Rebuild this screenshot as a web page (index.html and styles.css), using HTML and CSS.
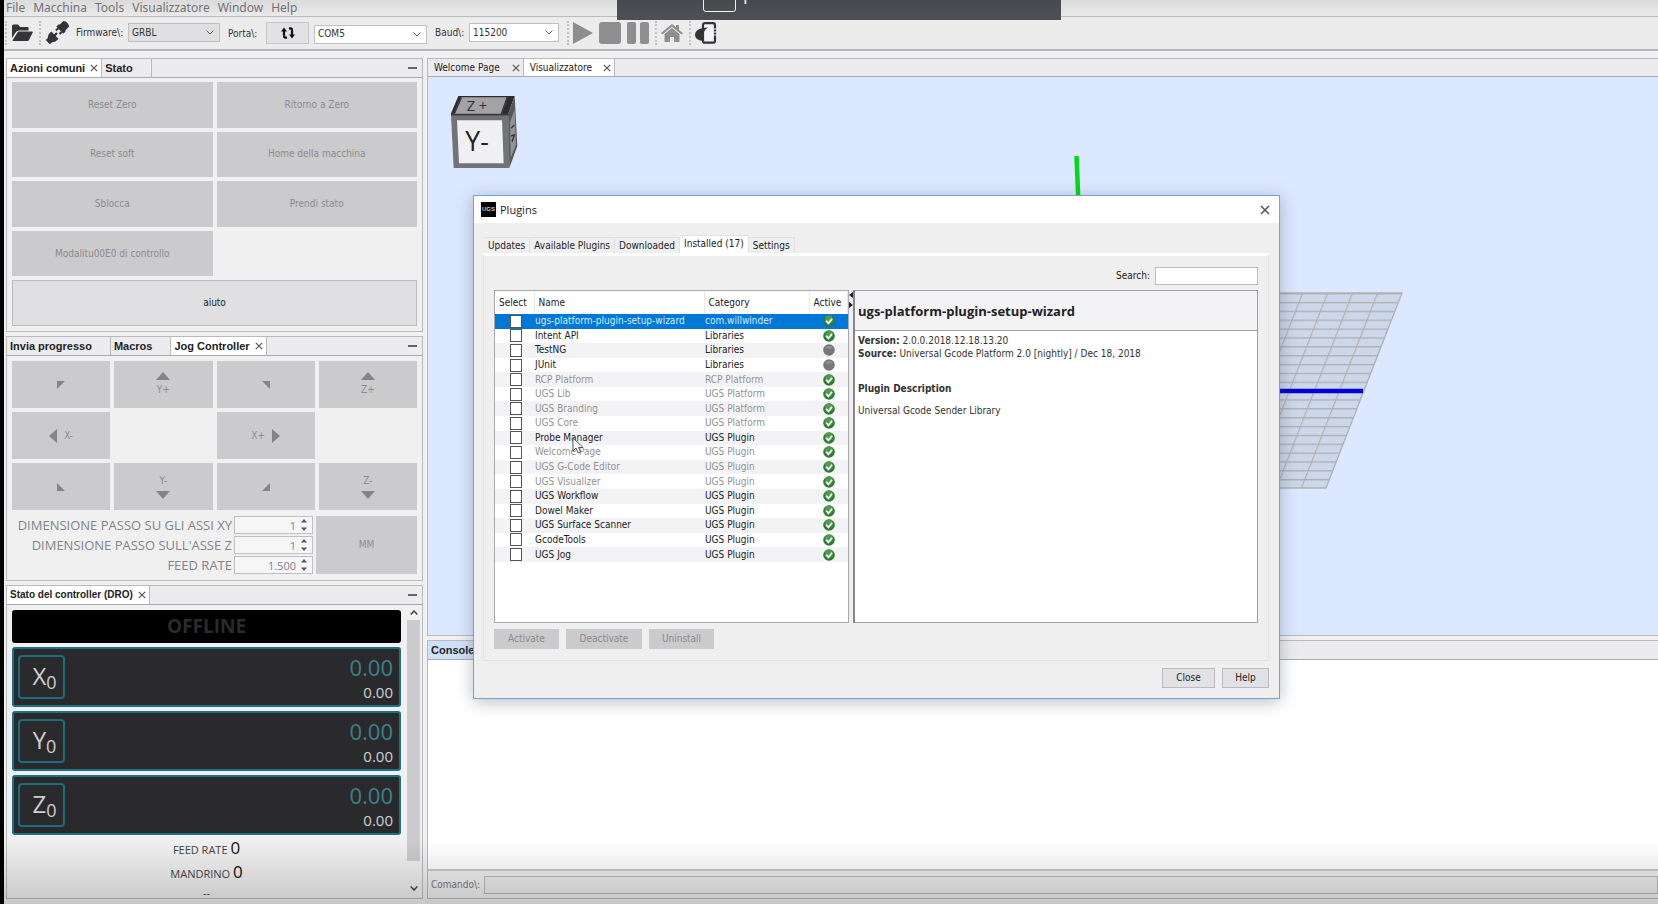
FILE: index.html
```html
<!DOCTYPE html>
<html lang="it">
<head>
  <meta charset="UTF-8">
  <title>Universal Gcode Platform</title>
  <link rel="stylesheet" href="styles.css">
</head>
<body>
  <!-- shared icons -->
  <svg class="defs" width="0" height="0">
    <symbol id="x" viewBox="0 0 8 8"><path d="M.8.8l6.4 6.4M7.2.8L.8 7.2" stroke="currentColor" stroke-width="1.2" fill="none"/></symbol>
    <symbol id="ok" viewBox="0 0 12 12"><circle cx="6" cy="6" r="5.8" fill="#2f7d33"/><circle cx="6" cy="4.6" r="4" fill="#4f9a4f"/><path d="M3.2 5.8l2.2 2.6 3.6-4.6" stroke="#fff" stroke-width="1.7" fill="none"/></symbol>
    <symbol id="off" viewBox="0 0 12 12"><circle cx="6" cy="6" r="5.8" fill="#777"/><path d="M2 4.5a4.5 4.5 0 0 1 8 0z" fill="#929292"/></symbol>
    <symbol id="spin" viewBox="0 0 6 12"><path d="M0 3.5L3 0l3 3.5zM0 8.5L3 12l3-3.5z" fill="#555"/></symbol>
  </svg>

  <nav class="menubar">
    <a href="#">File</a><a href="#">Macchina</a><a href="#">Tools</a><a href="#">Visualizzatore</a><a href="#">Window</a><a href="#">Help</a>
  </nav>

  <div class="toolbar">
    <i class="sep"></i>
    <button class="tool" aria-label="Apri"><svg width="22" height="18" viewBox="0 0 22 18"><path d="M1 14V2q0-1.500 1.500-1.500h4.500l2 2.500h7.500q1 0 1 1v2.500H8q-2 0-3 1.500z" fill="#333338"/><path d="M6.500 8.500q.5-1 1.500-1h13q1.300 0 .6 1.300L18 16q-.5 1-1.700 1H2.500q-1.200 0-.6-1.200z" fill="#333338"/></svg></button>
    <i class="sep"></i>
    <button class="tool" aria-label="Connetti"><svg width="24" height="24" viewBox="0 0 24 24"><g transform="rotate(45 12 12)" fill="#333338"><path d="M8-1q4-3 8 0v5l1 1v3H7V5l1-1z"/><path d="M8.500 8h2v3h-2zM13.500 8h2v3h-2z"/><path d="M7 15h10v4l-2 3v3H9v-3l-2-3z"/><path d="M10.900 12h2.200v4h-2.200z"/></g></svg></button>
    <label for="fw">Firmware\:</label>
    <select id="fw" class="combo grey"><option>GRBL</option></select>
    <label class="porta" for="port">Porta\:</label>
    <button class="refresh" aria-label="Aggiorna"><svg width="14" height="12" viewBox="0 0 14 12" fill="none" stroke="#111" stroke-width="2.200"><path d="M6 10.600H4.500q-1.500 0-1.500-1.500V3"/><path d="M8 1.400h1.500q1.500 0 1.500 1.500V9"/><path d="M0 4.500h6L3 .5zM8 7.500h6l-3 4z" fill="#111" stroke="none"/></svg></button>
    <select id="port" class="combo port"><option>COM5</option></select>
    <label class="baudl" for="baud">Baud\:</label>
    <select id="baud" class="combo baud"><option>115200</option></select>
    <i class="sep"></i>
    <button class="tool run" aria-label="Play" disabled><svg width="20" height="22"><path d="M0 0l20 11L0 22z"/></svg></button>
    <button class="tool run" aria-label="Stop" disabled><svg width="22" height="22"><rect width="22" height="22" rx="3"/></svg></button>
    <button class="tool run" aria-label="Pausa" disabled><svg width="22" height="22"><rect width="9" height="22" rx="2"/><rect x="13" width="9" height="22" rx="2"/></svg></button>
    <i class="sep"></i>
    <button class="tool run" aria-label="Home" disabled><svg width="22" height="18" viewBox="0 0 22 18"><path d="M0 9L11 0l4 3.300V1h3v5l4 3-1.300 1.500L11 2.800 1.300 10.500z"/><path d="M3.500 10L11 4l7.500 6v8H13v-5H9v5H3.500z"/></svg></button>
    <i class="sep"></i>
    <button class="tool" aria-label="Pendant"><svg width="22" height="22" viewBox="0 0 22 22"><rect x="8" y="1.200" width="12" height="19.500" rx="2" fill="#f4f4f6" stroke="#333338" stroke-width="2.200"/><path d="M13 5.500Q0 6 0 13q0 5 8 6v-5q0-5 5-8.500z" fill="#333338"/><path d="M18 7h4M18 10h4M18 13h4" stroke="#f4f4f6"/></svg></button>
  </div>

  <main>
    <aside>
      <section class="panel">
        <div class="tabs bold">
          <button class="on">Azioni comuni <svg><use href="#x"/></svg></button><button class="wide">Stato</button>
          <i class="min"></i>
        </div>
        <div class="actions">
          <button disabled>Reset Zero</button>
          <button disabled>Ritorno a Zero</button>
          <button disabled>Reset soft</button>
          <button disabled>Home della macchina</button>
          <button disabled>Sblocca</button>
          <button disabled>Prendi stato</button>
          <button disabled>Modalitu00E0 di controllo</button>
          <button class="help">aiuto</button>
        </div>
      </section>

      <section class="panel">
        <div class="tabs bold">
          <button class="wide">Invia progresso</button><button class="wide">Macros</button><button class="on">Jog Controller <svg><use href="#x"/></svg></button>
          <i class="min"></i>
        </div>
        <div class="jogbody">
          <div class="jog">
            <button disabled aria-label="X- Y+"><svg width="8" height="8"><path d="M0 0h8L0 8z"/></svg></button>
            <button disabled class="col"><svg width="14" height="8"><path d="M0 8l7-8 7 8z"/></svg>Y+</button>
            <button disabled aria-label="X+ Y+"><svg width="8" height="8"><path d="M0 0h8v8z"/></svg></button>
            <button disabled class="col"><svg width="14" height="8"><path d="M0 8l7-8 7 8z"/></svg>Z+</button>
            <button disabled><svg width="8" height="14"><path d="M8 0v14L0 7z"/></svg>X-</button>
            <span></span>
            <button disabled>X+<svg width="8" height="14"><path d="M0 0v14l8-7z"/></svg></button>
            <span></span>
            <button disabled aria-label="X- Y-"><svg width="8" height="8"><path d="M0 0v8h8z"/></svg></button>
            <button disabled class="col">Y-<svg width="14" height="8"><path d="M0 0h14L7 8z"/></svg></button>
            <button disabled aria-label="X+ Y-"><svg width="8" height="8"><path d="M8 0v8H0z"/></svg></button>
            <button disabled class="col">Z-<svg width="14" height="8"><path d="M0 0h14L7 8z"/></svg></button>
          </div>
          <div class="steps">
            <div class="fields">
              <label for="sxy">DIMENSIONE PASSO SU GLI ASSI XY</label>
              <div class="spinner"><input id="sxy" value="1" disabled><svg width="6" height="12"><use href="#spin"/></svg></div>
              <label for="sz">DIMENSIONE PASSO SULL'ASSE Z</label>
              <div class="spinner"><input id="sz" value="1" disabled><svg width="6" height="12"><use href="#spin"/></svg></div>
              <label for="feed">FEED RATE</label>
              <div class="spinner"><input id="feed" value="1.500" disabled><svg width="6" height="12"><use href="#spin"/></svg></div>
            </div>
            <button class="mm" disabled>MM</button>
          </div>
        </div>
      </section>

      <section class="panel dropanel">
        <div class="tabs bold">
          <button class="on">Stato del controller (DRO) <svg><use href="#x"/></svg></button>
          <i class="min"></i>
        </div>
        <div class="scroll">
          <div class="dro">
            <div class="state">OFFLINE</div>
            <div class="axis"><button>X<small>0</small></button><div><b>0.00</b><span>0.00</span></div></div>
            <div class="axis"><button>Y<small>0</small></button><div><b>0.00</b><span>0.00</span></div></div>
            <div class="axis"><button>Z<small>0</small></button><div><b>0.00</b><span>0.00</span></div></div>
            <p>FEED RATE <b>0</b></p>
            <p>MANDRINO <b>0</b></p>
            <p class="dash">--</p>
          </div>
          <div class="bar">
            <svg width="8" height="5"><path d="M.7 4.500L4 1l3.300 3.500"/></svg>
            <i></i>
            <svg width="8" height="5"><path d="M.7.5L4 4 7.300.5"/></svg>
          </div>
        </div>
      </section>
    </aside>

    <div class="right">
      <section class="editor">
        <div class="tabs">
          <button class="wp">Welcome Page <svg><use href="#x"/></svg></button><button class="on">Visualizzatore <svg><use href="#x"/></svg></button>
        </div>
        <div class="view">
          <svg class="scene" width="1230" height="562">
            <defs>
              <pattern id="bed" width="25" height="8.860" patternUnits="userSpaceOnUse" patternTransform="matrix(1 0 -.391 1 974 216)">
                <path d="M0 .6h25M.6 0v8.860" stroke="#b0b0b2" stroke-width="1.300"/>
              </pattern>
            </defs>
            <path d="M700 216h274l-76 195H624z" fill="#ccd7e9"/>
            <path d="M700 216h274l-76 195H624z" fill="url(#bed)" stroke="#b0b0b2" stroke-width="1.300"/>
            <path d="M700 314h235" stroke="#0000d0" stroke-width="4.500"/>
            <path d="M648.500 79l2.500 60" stroke="#00dc14" stroke-width="4.500"/>
          </svg>
          <svg class="cube" width="70" height="74" viewBox="150 285 210 222">
            <path d="M152 343l23-55h169l-20 56z" fill="#2c2b30"/>
            <path d="M184 292h138l-18 50H164z" fill="#a3a3a5"/>
            <path d="M324 344l20-56 8 150-24 66z" fill="#55555a"/>
            <path d="M330 366l14-38 4 106-16 40z" fill="#939396"/>
            <path d="M333 385l10-10M333 408l12-4M336 425l8-22" stroke="#333" stroke-width="4"/>
            <path d="M153 344h174l1 160H161z" fill="#717377"/>
            <path d="M171 361h135l5 129H177z" fill="#f0f0f2"/>
            <path d="M153 344h174M162 342l22-50M304 342l18-50" stroke="#3c3c40" stroke-width="5"/>
            <text x="196" y="453" font-size="80" fill="#222">Y-</text>
            <text x="200" y="333" font-size="44" fill="#333">Z +</text>
          </svg>
        </div>
      </section>
      <section class="console">
        <div class="tabs bold"><button>Console</button></div>
        <div class="log"></div>
        <div class="cmd"><label for="cmd">Comando\:</label><input id="cmd"></div>
      </section>
    </div>
  </main>

  <div class="dialog" role="dialog" aria-label="Plugins">
    <div class="title">
      <span class="logo">UGS</span>Plugins
      <button aria-label="Chiudi"><svg width="10" height="10"><use href="#x"/></svg></button>
    </div>
    <div class="dbody">
      <div class="dtabs"><button>Updates</button><button>Available Plugins</button><button>Downloaded</button><button class="on">Installed (17)</button><button>Settings</button></div>
      <div class="pane">
        <div class="search"><label for="q">Search:</label><input id="q"></div>
        <div class="split">
          <div class="list">
            <table>
              <thead><tr><th class="c1">Select</th><th class="c2">Name</th><th class="c3">Category</th><th>Active</th></tr></thead>
              <tbody>
                <tr class="sel"><td><input type="checkbox" aria-label="ugs-platform-plugin-setup-wizard"></td><td>ugs-platform-plugin-setup-wizard</td><td>com.willwinder</td><td><svg><use href="#ok"/></svg></td></tr>
                <tr><td><input type="checkbox" aria-label="Intent API"></td><td>Intent API</td><td>Libraries</td><td><svg><use href="#ok"/></svg></td></tr>
                <tr><td><input type="checkbox" aria-label="TestNG"></td><td>TestNG</td><td>Libraries</td><td><svg><use href="#off"/></svg></td></tr>
                <tr><td><input type="checkbox" aria-label="JUnit"></td><td>JUnit</td><td>Libraries</td><td><svg><use href="#off"/></svg></td></tr>
                <tr class="dim"><td><input type="checkbox" aria-label="RCP Platform"></td><td>RCP Platform</td><td>RCP Platform</td><td><svg><use href="#ok"/></svg></td></tr>
                <tr class="dim"><td><input type="checkbox" aria-label="UGS Lib"></td><td>UGS Lib</td><td>UGS Platform</td><td><svg><use href="#ok"/></svg></td></tr>
                <tr class="dim"><td><input type="checkbox" aria-label="UGS Branding"></td><td>UGS Branding</td><td>UGS Platform</td><td><svg><use href="#ok"/></svg></td></tr>
                <tr class="dim"><td><input type="checkbox" aria-label="UGS Core"></td><td>UGS Core</td><td>UGS Platform</td><td><svg><use href="#ok"/></svg></td></tr>
                <tr><td><input type="checkbox" aria-label="Probe Manager"></td><td>Probe Manager</td><td>UGS Plugin</td><td><svg><use href="#ok"/></svg></td></tr>
                <tr class="dim"><td><input type="checkbox" aria-label="Welcome Page"></td><td>Welcome Page</td><td>UGS Plugin</td><td><svg><use href="#ok"/></svg></td></tr>
                <tr class="dim"><td><input type="checkbox" aria-label="UGS G-Code Editor"></td><td>UGS G-Code Editor</td><td>UGS Plugin</td><td><svg><use href="#ok"/></svg></td></tr>
                <tr class="dim"><td><input type="checkbox" aria-label="UGS Visualizer"></td><td>UGS Visualizer</td><td>UGS Plugin</td><td><svg><use href="#ok"/></svg></td></tr>
                <tr><td><input type="checkbox" aria-label="UGS Workflow"></td><td>UGS Workflow</td><td>UGS Plugin</td><td><svg><use href="#ok"/></svg></td></tr>
                <tr><td><input type="checkbox" aria-label="Dowel Maker"></td><td>Dowel Maker</td><td>UGS Plugin</td><td><svg><use href="#ok"/></svg></td></tr>
                <tr><td><input type="checkbox" aria-label="UGS Surface Scanner"></td><td>UGS Surface Scanner</td><td>UGS Plugin</td><td><svg><use href="#ok"/></svg></td></tr>
                <tr><td><input type="checkbox" aria-label="GcodeTools"></td><td>GcodeTools</td><td>UGS Plugin</td><td><svg><use href="#ok"/></svg></td></tr>
                <tr><td><input type="checkbox" aria-label="UGS Jog"></td><td>UGS Jog</td><td>UGS Plugin</td><td><svg><use href="#ok"/></svg></td></tr>
              </tbody>
            </table>
          </div>
          <svg class="grip" width="4" height="20"><path d="M4 2v6L0 5zM0 12v6l4-3z"/></svg>
          <div class="detail">
            <h2>ugs-platform-plugin-setup-wizard</h2>
            <div class="info">
              <div><b>Version:</b> 2.0.0.2018.12.18.13.20</div>
              <div><b>Source:</b> Universal Gcode Platform 2.0 [nightly] / Dec 18, 2018</div>
              <h3>Plugin Description</h3>
              <div>Universal Gcode Sender Library</div>
            </div>
          </div>
        </div>
        <div class="acts"><button disabled>Activate</button><button class="de" disabled>Deactivate</button><button disabled>Uninstall</button></div>
      </div>
      <div class="foot"><button>Close</button><button>Help</button></div>
    </div>
  </div>

  <svg class="cursor" width="12" height="17" viewBox="0 0 12 17"><path d="M1 1v13l3-3 2 5 2.500-1-2-4.500H11z" fill="#fff" stroke="#555"/></svg>
  <div class="toast"><i></i><span>p</span></div>
  <div class="shade"></div>
</body>
</html>
```
FILE: styles.css
```css
* { box-sizing: border-box; }
html, body { height: 100%; }
body { margin: 0; overflow: hidden; display: flex; flex-direction: column; border-left: 4px solid #000; background: #f0f0f1; color: #222; font: 10px/14px "DejaVu Sans Condensed", "Noto Sans", sans-serif; }
button, input, select { font: inherit; color: inherit; margin: 0; padding: 0; border: 0; border-radius: 0; }
button { background: none; white-space: nowrap; }
a { color: inherit; text-decoration: none; }
.defs { position: absolute; }

/* menu + toolbar */
.menubar { flex: none; height: 17px; padding: 0 2px; display: flex; gap: 8px; align-items: center; border-bottom: 1px solid #bdbdc0; background: #ededee; color: #777; font: 12px/16px "Noto Sans", sans-serif; }
.toolbar { flex: none; height: 34px; padding: 0 1px 1px; display: flex; align-items: center; border-bottom: 2px solid #b6b6ba; background: #ececed; color: #333; }
.toolbar label { margin: 0 5px 0 7px; width: 47px; }
.toolbar .porta { width: 31px; margin: 2px 7px 0 8px; }
.toolbar .baudl { width: 29px; margin: 0 5px 0 8px; }
.sep { width: 2px; height: 24px; margin-right: 4px; border-left: 2px dotted #c2c2c6; }
.tool { height: 24px; margin-right: 6px; display: flex; align-items: center; }
.tool + label { margin-left: 1px; }
.run { fill: #8e8e90; }
.combo { appearance: none; width: 92px; height: 19px; padding: 0 3px; border: 1px solid #c0c0c4; background: #fff url("data:image/svg+xml,%3Csvg xmlns='http://www.w3.org/2000/svg' width='8' height='5'%3E%3Cpath d='M.5.5L4 4 7.500.5' fill='none' stroke='%23666'/%3E%3C/svg%3E") no-repeat right 5px center; }
.grey { background-color: #e0e0e2; }
.port { width: 113px; margin-left: 5px; margin-top: 3px; }
.baud { width: 90px; margin-right: 8px; }
.refresh { width: 43px; height: 22px; border: 1px solid #c6c6ca; background: #e2e2e4; display: flex; align-items: center; justify-content: center; }

main { flex: 1; min-height: 0; display: flex; gap: 4px; padding: 7px 0 5px 2px; }
aside { width: 417px; display: flex; flex-direction: column; gap: 4px; }
.right { flex: 1; min-width: 0; display: flex; flex-direction: column; gap: 4px; }
.panel { border: 1px solid #b9b9be; flex: none; }

.tabs { height: 19px; flex: none; display: flex; border-bottom: 1px solid #a9a9ae; background: #ececee; }
.bold { font: bold 11px/14px "Liberation Sans", sans-serif; }
.tabs button { padding: 0 3px; display: flex; align-items: center; gap: 5px; border-right: 1px solid #b9b9be; }
.tabs svg { width: 8px; height: 8px; color: #555; }
.tabs .on { background: #fff; }
.tabs .wide { padding-right: 18px; }
.tabs .wp { padding-left: 6px; gap: 12px; }
.editor .on { gap: 11px; padding-left: 6px; }
.min { width: 9px; height: 2px; margin: 8px 5px 0 auto; background: #666; }

.actions { height: 253px; padding: 4px 5px 5px; display: grid; grid-template-columns: 1fr 1fr; grid-auto-rows: 1fr; gap: 4px; }
.actions button, .jog button, .mm { background: #cbcacd; color: #8b8b8d; }
.actions .help { grid-column: 1 / 3; border: 1px solid #bdbdc1; background: #e0dfe2; color: #222; }

.jogbody { padding: 5px; }
.jog { height: 149px; display: grid; grid-template-columns: repeat(4, 1fr); grid-auto-rows: 1fr; gap: 4px; }
.jog button { display: flex; align-items: center; justify-content: center; gap: 7px; fill: #858587; }
.jog .col { flex-direction: column; gap: 3px; }
.steps { display: flex; gap: 3px; margin: 6px 0 1px; }
.fields { flex: 1; display: grid; grid-template-columns: 1fr 79px; gap: 2px; align-items: center; text-align: right; color: #838386; font: 13px/18px "Open Sans", "Noto Sans", sans-serif; white-space: nowrap; }
.spinner { height: 18px; display: flex; align-items: center; border: 1px solid #c0c0c4; background: #f6f6f7; font-size: 11px; line-height: 14px; }
.spinner input { width: 61px; height: 16px; flex: none; text-align: right; background: none; }
.spinner svg { margin-left: 5px; }
.mm { width: 101px; }

/* DRO */
.dropanel { flex: 1; min-height: 0; display: flex; flex-direction: column; }
.dropanel .tabs { font-size: 10px; }
.scroll { flex: 1; min-height: 0; display: flex; padding: 5px 0 0 5px; }
.dro { flex: 1; display: flex; flex-direction: column; gap: 4px; font-family: "Open Sans", "Noto Sans", sans-serif; }
.state { flex: none; height: 33px; border-radius: 3px; background: #000; color: #2b2b2d; text-align: center; font-weight: bold; font-size: 19px; line-height: 33px; }
.axis { flex: none; height: 60px; padding: 0 6px 0 4px; display: flex; align-items: center; justify-content: space-between; border: 2px solid #1c7183; border-radius: 3px; background: #2a2a2d; }
.axis button { width: 47px; height: 44px; padding-left: 6px; border: 2px solid #1b6c7d; border-radius: 4px; color: #cfcfcf; font-size: 24px; line-height: 38px; }
.axis small { font-size: 18px; position: relative; top: 4px; }
.axis div { display: flex; flex-direction: column; align-items: flex-end; }
.axis b { color: #3f7f8c; font-weight: normal; font-size: 22px; line-height: 30px; }
.axis span { color: #cfcfcf; font-size: 15px; line-height: 20px; }
.dro p { margin: 0; height: 20px; text-align: center; color: #444; font-size: 11px; line-height: 20px; }
.dro p b { color: #111; font-weight: normal; font-size: 17px; line-height: 18px; }
.dro .dash { height: 12px; line-height: 12px; }
.bar { width: 13px; margin: 0 2px 5px 6px; display: flex; flex-direction: column; align-items: center; }
.bar svg { flex: none; fill: none; stroke: #444; stroke-width: 1.5; margin-bottom: 5px; }
.bar i { flex: none; width: 13px; height: 85%; margin-bottom: auto; background: #cbcacd; }
.bar svg:last-child { margin-bottom: 2px; }

/* visualizer */
.editor { flex: 1; min-height: 0; display: flex; flex-direction: column; border: 1px solid #b9b9be; border-right: 0; }
.editor .tabs { height: 18px; }
.view { flex: 1; position: relative; overflow: hidden; background: #dce8ff; }
.scene { position: absolute; left: 0; top: 0; }
.cube { position: absolute; left: 22px; top: 18px; font-family: "Open Sans", "Noto Sans", sans-serif; }
.console { flex: none; height: 259px; display: flex; flex-direction: column; border: 1px solid #b9b9be; border-right: 0; }
.console button { border: 0; background: #cfe1f6; }
.log { flex: 1; background: #fff; border-bottom: 2px solid #c8c8cb; }
.cmd { height: 27px; padding: 4px 0 4px 3px; display: flex; align-items: center; color: #777; }
.cmd label { width: 53px; }
.cmd input { flex: 1; height: 18px; border: 1px solid #b9b9be; background: #ececec; }

/* plugins dialog, floats over the main window */
.dialog { position: absolute; left: 473px; top: 195px; width: 807px; border: 1px solid #6fa5d6; background: #efeff0; box-shadow: 0 3px 16px rgba(60, 70, 90, .35); }
.title { height: 27px; padding: 0 9px 0 7px; display: flex; align-items: center; background: #fff; font: 11px/16px "Open Sans", "Noto Sans", sans-serif; }
.title button { margin-left: auto; line-height: 0; }
.title svg { color: #555; }
.logo { width: 15px; height: 15px; margin-right: 4px; background: #000; color: #ccc; text-align: center; font: bold 6px/15px "Liberation Sans", sans-serif; }
.dbody { padding: 12px 10px 10px 9px; }
.dtabs { height: 18px; padding-left: 1px; display: flex; align-items: flex-end; }
.dtabs button { height: 16px; padding: 0 4px; border: 1px solid #e2e2e4; border-width: 1px 1px 0 0; }
.dtabs .on { height: 18px; padding: 0 4px 2px; background: #fff; }
.pane { border: 1px solid #e4e4e6; border-top: 3px solid #fff; padding: 11px 10px; }
.search { height: 18px; display: flex; justify-content: flex-end; align-items: center; gap: 5px; }
.search input { width: 103px; height: 18px; border: 1px solid #bdbdc1; background: #fff; }
.split { height: 333px; margin-top: 5px; display: flex; }
.list { width: 355px; border: 1px solid #a8a8ac; background: #fff; }
.grip { flex: none; fill: #222; }
.detail { flex: 1; border: 1px solid #a0a0a4; border-left: 2px solid #88888c; background: #fff; }
h2 { margin: 0; height: 40px; padding-left: 3px; border-bottom: 1px solid #a0a0a4; background: #f3f3f6; font: bold 13px/40px "Open Sans", "Noto Sans", sans-serif; color: #222; }
.info { padding: 3px; line-height: 13px; color: #333; }
h3 { margin: 22px 0 9px; font-size: 10px; line-height: 13px; }

table { width: 100%; height: 271px; border-collapse: collapse; table-layout: fixed; }
th, td { padding: 0 0 0 1px; text-align: left; font-weight: normal; line-height: 14px; white-space: nowrap; }
th { height: 23px; padding-left: 4px; border-right: 1px solid #e8e8ea; }
.c1 { width: 39px; }
.c2 { width: 170px; }
.c3 { width: 105px; }
tbody tr:nth-child(odd) { background: #f3f3f6; }
tbody tr.sel { background: #0078d7; color: #d8ecff; }
.dim { color: #929294; }
td:first-child { padding-left: 15px; }
td:last-child { padding-left: 14px; }
td svg { width: 12px; height: 12px; display: block; }
td input { appearance: none; display: block; width: 12px; height: 13px; border: 1px solid #555; background: #fff; }

.acts { display: flex; gap: 7px; margin-top: 6px; }
.acts button { width: 65px; height: 20px; background: #cbcacd; color: #8b8b8d; }
.acts .de { width: 76px; }
.foot { display: flex; justify-content: flex-end; gap: 7px; margin-top: 7px; }
.foot button { width: 47px; height: 20px; border: 1px solid #b9b9be; background: #e2e2e4; }
.foot button:first-child { width: 53px; }

.cursor { position: absolute; left: 572px; top: 437px; }
.toast { position: absolute; left: 617px; top: 0; width: 444px; height: 20px; overflow: hidden; background: #4d5055; color: #fff; }
.toast i { position: absolute; left: 86px; top: -20px; width: 33px; height: 32px; border: 1px solid #fff; border-radius: 3px; }
.toast span { position: absolute; left: 126px; top: -18px; font: 18px/22px "Noto Sans", sans-serif; }
.shade { position: absolute; inset: 0; pointer-events: none; background: linear-gradient(rgba(0,0,0,.08), transparent 20px, transparent calc(100% - 64px), rgba(0,0,0,.17)); }
```
